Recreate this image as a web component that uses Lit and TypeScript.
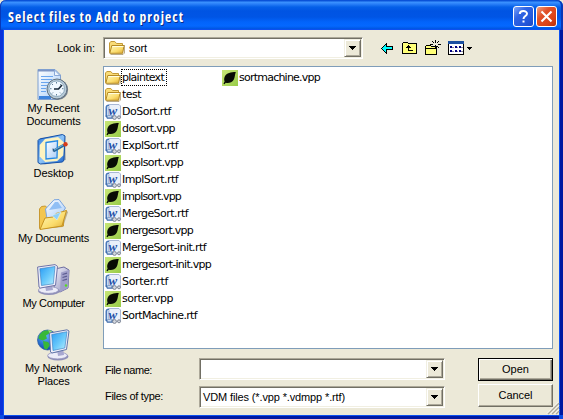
import { LitElement, html, svg, css } from "lit";
import { customElement, property } from "lit/decorators.js";

/** A run of text spaced out to an exact width, as bitmap UI fonts are. */
@customElement("ui-text")
class UiText extends LitElement {
  @property({ type: Number }) w = 0;
  @property() text = "";
  static styles = css`
    :host { display: inline-block; white-space: pre; }
  `;
  render() {
    return html`<span>${this.text}</span>`;
  }
  updated() {
    const s = this.renderRoot.querySelector("span") as HTMLElement;
    s.style.letterSpacing = "0px";
    const n = s.getBoundingClientRect().width;
    s.style.letterSpacing = `${(this.w - n) / this.text.length}px`;
  }
}

const defs = svg`<defs>
  <linearGradient id="fold" x1="0" y1="0" x2="1" y2="1"><stop offset="0" stop-color="#fffbc4"/><stop offset=".6" stop-color="#fbdc6c"/><stop offset="1" stop-color="#dca832"/></linearGradient>
  <linearGradient id="scr" x1="0" y1="0" x2="1" y2="1"><stop offset="0" stop-color="#2a9cf4"/><stop offset=".55" stop-color="#6ccbfb"/><stop offset="1" stop-color="#bdf0ff"/></linearGradient>
  <linearGradient id="gry" x1="0" y1="0" x2="1" y2="1"><stop offset="0" stop-color="#f4f4fc"/><stop offset="1" stop-color="#8c8cba"/></linearGradient>
  <linearGradient id="blu" x1="0" y1="0" x2="1" y2="1"><stop offset="0" stop-color="#2c7ae0"/><stop offset=".5" stop-color="#8cc4f8"/><stop offset="1" stop-color="#1c64cc"/></linearGradient>
  <linearGradient id="pap" x1="0" y1="0" x2="1" y2="1"><stop offset="0" stop-color="#ffffff"/><stop offset="1" stop-color="#a8ccf8"/></linearGradient>
  <linearGradient id="grn" x1="0" y1="0" x2="1" y2="1"><stop offset="0" stop-color="#c8e678"/><stop offset="1" stop-color="#98cc48"/></linearGradient>
  <radialGradient id="glb" cx=".4" cy=".3" r=".7"><stop offset="0" stop-color="#60b8ff"/><stop offset="1" stop-color="#0c48b4"/></radialGradient>
</defs>`;

const folder = svg`
  <path d="M1.500 14.500h12.500l1.500-1.500V5" fill="none" stroke="#8c7440" stroke-opacity=".6"/>
  <path d="M.5 12.500V3L1.800 1.500h4L7.500 3.500h6v9z" fill="#f9dc78" stroke="#c39a38"/>
  <path d="M.8 13.300L2.800 5.500h12.200l-1.300 7.800z" fill="url(#fold)" stroke="#b58a24"/>
  <path d="M3.500 6.500h11" stroke="#fffde0"/>`;

const rtf = svg`
  <path d="M4 .5h10l1.500 1.500v11.500H4z" fill="#eaf0fa" stroke="#a9b8d6"/>
  <path d="M1.300 13V3.500Q1.300 1.300 4 1.300" fill="none" stroke="#4a78b8" stroke-width="1.600"/>
  <path d="M.5 11.500h8.500v3.300H2z" fill="#3f6caa"/>
  <path d="M2.500 12.800h4" stroke="#e4eefa" stroke-width="1.300"/>
  <path d="M2.500 3h1.500v8H2.500z" fill="#a7c2e6"/>
  <text class="w" x="3.600" y="10.500">w</text>
  <circle cx="9.500" cy="13.500" r="1.900" fill="#d4d8e0" stroke="#7f8795"/>
  <circle cx="14" cy="13.300" r="1.500" fill="#d4d8e0" stroke="#7f8795"/>`;

const vpp = svg`
  <rect width="16" height="16" fill="url(#grn)"/>
  <path d="M13.800 2C9 2 4.500 3 2.800 6.500c-1 2-.6 4-.2 5L1.500 13.700l1 .5 1.200-1.500c3 .8 6.300-.2 8-3C13 7.500 12.800 4.500 13.800 2z" fill="#080c04"/>`;

const small: Record<string, unknown> = { folder, rtf, vpp };
const icon16 = (k: string) => html`<svg class="i16" viewBox="0 0 16 16">${defs}${small[k]}</svg>`;

const recent = svg`
  <path d="M1 .5h17l5.500 5.500V29L21 30.500H1z" fill="url(#pap)" stroke="#7f9fd0"/>
  <path d="M1 1h16v1.500H1z" fill="#7c94c4"/>
  <path d="M17.500 1v5.500H23z" fill="#eef6ff" stroke="#8caad8"/>
  <path d="M4 7.500h12M4 10.500h11M4 13.500h8M4 16.500h6M4 19.500h5M4 22.500h5" stroke="#6aa5ee"/>
  <path d="M2 28.500h12" stroke="#3f84dc" stroke-width="3"/>
  <circle cx="20.700" cy="20.700" r="10.400" fill="#77828e"/>
  <circle cx="20" cy="20" r="10" fill="#b9cbd8" stroke="#607282"/>
  <circle cx="19.700" cy="19.700" r="7.800" fill="#f1f9ff" stroke="#8ba8bc"/>
  <path d="M19.500 13v1.500M19.500 25v1.500M13 19.700h1.500M25 19.700h1.500M24 15l-1 1M15 15l1 1M15 24.500l1-1M24 24.500l-1-1" stroke="#5f7f98"/>
  <path d="M17 20h4.500L25 16" fill="none" stroke="#182838" stroke-width="1.700"/>`;

const desktop = svg`
  <path d="M3.500 4L28 1l1 25-21 4.500L1.500 29z" fill="#8c949c" opacity=".6"/>
  <path d="M1 6.500L2.500 5l23-4.500L28 2l-1 24-1.500 2-22 2L1 28.500z" fill="url(#blu)" stroke="#1450a8"/>
  <path d="M8 5l13-2 6 5.500-.8 13-6 5.500-12 1-5.500-5.500V11z" fill="#fdf3c0"/>
  <path d="M9 8.500l11.500-1.700-.5 17L9 25z" fill="url(#pap)" stroke="#2488e4" stroke-width="1.300"/>
  <path d="M15.500 14.500l3 .8-2.500 2.700z" fill="#284868"/>
  <path d="M16.500 17L27 11" stroke="#28689c" stroke-width="2.600"/>
  <path d="M17 16l9-5" stroke="#86c7ec" stroke-width=".8"/>
  <circle cx="28.500" cy="10.300" r="2.200" fill="#d83c18"/>`;

const documents = svg`
  <path d="M4 30l22-2 5-15-2-2z" fill="#887848" opacity=".5"/>
  <path d="M2.500 29.500V10l2-2.500 4-.5 2 2.500 16 1V27z" fill="#f3c650" stroke="#c89830"/>
  <path d="M8.500 10L17 .8l5-.3L28.500 9 21 20H10z" fill="url(#pap)" stroke="#7ba6e0"/>
  <path d="M12 11l6-8 3 0 4 6z" fill="#90bff5"/>
  <path d="M3 30.500L8 19l8-1 3-3.500 10.500-3L25 27z" fill="url(#fold)" stroke="#c89420"/>
  <path d="M15 16.500l9-3.500-4 8z" fill="#8fd0f8" stroke="#d8f0ff" stroke-width=".6"/>`;

const computer = svg`
  <path d="M18 5l9-2 5 3-1 18-8 4-6-3z" fill="url(#gry)" stroke="#6c6ca0"/>
  <path d="M24 8.500l8-2.500-1 18-8 4z" fill="#a09fc9"/>
  <path d="M25.500 10.500l4.500-1.300M25.500 13.500l4.500-1.300M25.500 16.500l4.500-1.300" stroke="#5d5d92" stroke-width="1.300"/>
  <circle cx="29" cy="21.500" r="1.200" fill="#54e018"/>
  <ellipse cx="12" cy="27" rx="11" ry="4" fill="#9090b8"/>
  <ellipse cx="11.500" cy="26" rx="10" ry="3.400" fill="#ececf8" stroke="#8888b4" stroke-width=".7"/>
  <path d="M8 21h7l1 5-7 1z" fill="#a8a8d0"/>
  <path d="M.6 3L18 .6l2.500 1.700-2 19L3.500 24l-1.500-1z" fill="#f0f0fb" stroke="#7074a8"/>
  <path d="M2.800 4.700L18 2.500l-1.700 17.300L4.500 21.500z" fill="url(#scr)" stroke="#3478bc" stroke-width=".6"/>`;

const network = svg`
  <circle cx="10.500" cy="11" r="10" fill="url(#glb)" stroke="#2458a0" stroke-width=".7"/>
  <path d="M8 1.500l5 0-1 3-3 2 1 3-4 2-3-1-1.500-1C2 5.500 4.500 2.500 8 1.500zM6 12l5 1 2 3-3 4.500-3-1z" fill="#38b838"/>
  <path d="M11 1l4 1-2 3z" fill="#98e070"/>
  <ellipse cx="21" cy="27.500" rx="10.500" ry="4" fill="#9090b8"/>
  <ellipse cx="20.500" cy="26.500" rx="9.800" ry="3.400" fill="#ececf8" stroke="#8888b4" stroke-width=".7"/>
  <path d="M20 20l6-1 1 7-6 1z" fill="#a8a8d0"/>
  <path d="M12.500 4L30 .8l2 1.200-2.500 18.500L15 24l-1.500-1z" fill="#f0f0fb" stroke="#6074a8"/>
  <path d="M14.700 5.500L30 2.700 27.800 19 16 21.500z" fill="url(#scr)" stroke="#3478bc" stroke-width=".6"/>`;

const places = [
  { icon: recent, lines: [["My Recent", 52], ["Documents", 54]] },
  { icon: desktop, lines: [["Desktop", 40]] },
  { icon: documents, lines: [["My Documents", 71]] },
  { icon: computer, lines: [["My Computer", 62]] },
  { icon: network, lines: [["My Network", 57], ["Places", 32]] },
] as { icon: unknown; lines: [string, number][] }[];

const files: [string, string, number][] = [
  ["folder", "plaintext", 42], ["folder", "test", 19],
  ["rtf", "DoSort.rtf", 49], ["vpp", "dosort.vpp", 53],
  ["rtf", "ExplSort.rtf", 56], ["vpp", "explsort.vpp", 61],
  ["rtf", "ImplSort.rtf", 56], ["vpp", "implsort.vpp", 59],
  ["rtf", "MergeSort.rtf", 66], ["vpp", "mergesort.vpp", 71],
  ["rtf", "MergeSort-init.rtf", 84], ["vpp", "mergesort-init.vpp", 89],
  ["rtf", "Sorter.rtf", 46], ["vpp", "sorter.vpp", 51],
  ["rtf", "SortMachine.rtf", 75], ["vpp", "sortmachine.vpp", 81],
];

const arrow = html`<span class="drop"><svg width="7" height="4" viewBox="0 0 7 4" shape-rendering="crispEdges"><path d="M0 0h7v1H6v1H5v1H4v1H3V3H2V2H1V1H0z"/></svg></span>`;

@customElement("app-root")
class AppRoot extends LitElement {
  static styles = css`
    :host {
      display: flex; flex-direction: column; box-sizing: border-box;
      width: 563px; height: 419px; overflow: hidden;
      font: 11px/13px "Liberation Sans", Arial, sans-serif; color: #000;
      background: linear-gradient(#ece9d8 12px, #0a4ae4 12px);
    }
    * { box-sizing: border-box; }
    svg { display: block; flex: none; overflow: visible; }
    .title {
      height: 30px; flex: none; display: flex; align-items: center; padding: 3px 6px 0 8px;
      background: linear-gradient(#0a52d8 0, #0a52d8 1px, #3d95ff 2px, #2a80f8 4px, #0560e8 7px, #0054e3 11px, #0055e5 17px, #0264fb 22px, #0468ff 26px, #0054e0 29px, #0046c8 30px);
      border-radius: 6px 6px 0 0;
      box-shadow: inset 1px 0 #0838b8, inset -2px 0 #0838b8;
    }
    .title ui-text {
      flex: 1; color: #fff; font: bold 13.5px/20px "Open Sans", "Noto Sans", sans-serif; font-stretch: 87%;
      text-shadow: 1px 1px #0a2c88;
    }
    .cap { width: 21px; height: 21px; border: 1px solid #fff; border-radius: 3px; margin-left: 2px;
      display: grid; place-items: center; }
    .help { background: linear-gradient(135deg, #7ca4f8, #3064e4 35%, #2458dc 70%, #1c48c4); }
    .close { background: linear-gradient(135deg, #f0a080, #e05028 35%, #dc4418 70%, #b83008); }
    .body {
      flex: 1; min-height: 0; margin: 0 4px 4px; background: #ece9d8;
      display: grid; grid-template-columns: 99px 1fr; position: relative;
      box-shadow: 0 0 0 1px #0c50f0, -4px 0 0 -1px #0831d9, 0 4px #0018a0, 4px 0 #0018a0, -4px 0 #0831d9;
    }
    .left { padding-top: 7px; }
    .left .lookin { height: 32px; text-align: right; padding: 5px 8px 0 0; }
    .place { height: 65px; display: flex; flex-direction: column; align-items: center; }
    .place svg { width: 32px; height: 32px; margin-bottom: 1px; margin-right: 2px; }
    .main { display: flex; flex-direction: column; padding: 7px 6px 0 0; }
    .row { display: flex; }
    .sunk {
      background: #fff; border: 1px solid; border-color: #aca899 #fff #fff #aca899;
      box-shadow: inset 1px 1px #716f64, inset -1px -1px #f1efe2;
      display: flex; align-items: center;
    }
    .look { width: 260px; height: 22px; padding: 0 1px 0 5px; }
    .look ui-text { flex: 1; margin-left: 4px; }
    .drop {
      width: 17px; height: 18px; flex: none; background: #ece9d8; display: grid; place-items: center;
      border: 1px solid; border-color: #f1efe2 #716f64 #716f64 #f1efe2;
      box-shadow: inset 1px 1px #fff, inset -1px -1px #aca899;
    }
    .tools { margin: 3px 0 0 18px; }
    .list {
      height: 283px; width: 450px; margin-top: 7px; border: 1px solid #7f9db9; background: #fff; padding: 2px 1px;
      display: grid; grid-auto-flow: column; grid-template-rows: repeat(15, 17px); grid-template-columns: 117px auto;
      justify-content: start; align-content: start;
    }
    .file { display: flex; align-items: center; font: 11px/13px "DejaVu Sans", sans-serif; }
    .i16 { width: 16px; height: 16px; }
    .w { font: italic bold 13px "Liberation Serif", serif; fill: #2350a8; }
    .file .name { height: 17px; line-height: 15px; padding: 1px; }
    .file .sel { padding: 0; border: 1px dotted #000; width: 46px; }
    .foot { margin-top: 9px; height: 50px; display: grid; grid-template-columns: 96px 246px 109px; }
    .labels { padding: 6px 0 0 2px; display: flex; flex-direction: column; gap: 13px; }
    .fields { display: flex; flex-direction: column; gap: 6px; }
    .fields .sunk { height: 22px; padding: 0 1px 0 3px; }
    .fields .sunk ui-text, .grow { flex: 1; }
    .buttons { margin-left: 33px; width: 75px; display: flex; flex-direction: column; gap: 3px; }
    .btn {
      height: 23px; display: grid; place-items: center; border: 1px solid;
      border-color: #fff #716f64 #716f64 #fff; box-shadow: inset -1px -1px #aca899;
    }
    .btn.def { border-color: #000; box-shadow: inset 1px 1px #fff, inset -1px -1px #716f64, inset -2px -2px #aca899; }
    .grip { position: absolute; right: 0; bottom: 1px; }
  `;

  render() {
    return html`
      <div class="title">
        <ui-text .w=${176} text="Select files to Add to project"></ui-text>
        <div class="cap help"><svg width="11" height="13" viewBox="0 0 11 13"><path d="M1.800 4C1.800 .2 9 .2 9 3.700 9 6 5.500 6.200 5.500 9" fill="none" stroke="#fff" stroke-width="2"/><path d="M4.500 10.500h2v2h-2z" fill="#fff"/></svg></div>
        <div class="cap close"><svg width="11" height="11" viewBox="0 0 11 11"><path d="M.5 .5l10 10M10.500 .5l-10 10" stroke="#fff" stroke-width="2.100"/></svg></div>
      </div>
      <div class="body">
        <div class="left">
          <div class="lookin"><ui-text .w=${38} text="Look in:"></ui-text></div>
          ${places.map(p => html`<div class="place">
            <svg viewBox="0 0 32 32">${defs}${p.icon}</svg>
            ${p.lines.map(([t, w]) => html`<ui-text .w=${w} text=${t}></ui-text>`)}
          </div>`)}
        </div>
        <div class="main">
          <div class="row">
            <div class="sunk look">${icon16("folder")}<ui-text .w=${18} text="sort"></ui-text>${arrow}</div>
            <svg class="tools" width="94" height="16" viewBox="0 0 94 16" shape-rendering="crispEdges">
              <path d="M.5 8.500L5.500 3.500v3h6v3h-6v4z" fill="#00ffff" stroke="#000"/>
              <path d="M21.500 13.500v-10l1-1h4l1 1h8v10z" fill="#ffff78" stroke="#000"/>
              <path d="M25 7h1V6h1V5h1v1h1v1h1v1h-2v2h4v1h-5V8h-2z"/>
              <path d="M44.500 14.500v-8l1-1h4l1 1h5v8z" fill="#ffff78" stroke="#000"/>
              <path d="M44.500 8.500h11" stroke="#000"/>
              <path d="M54 0h1v3h-1zM54 5h1v3h-1zM49 4h3v1h-3zM57 4h3v1h-3zM51 1h1v1h-1zM52 2h1v1h-1zM57 1h1v1h-1zM56 2h1v1h-1zM52 6h1v1h-1zM56 6h1v1h-1zM57 7h1v1h-1z"/>
              <path d="M67.500 1.500h15v13h-15z" fill="#fff" stroke="#000"/>
              <path d="M67 1h16v3H67z" fill="#1c50a0"/>
              <path d="M69 6h2v2h-2zM73.500 6h2v2h-2zM78 6h2v2h-2zM69 10h2v2h-2zM74 10h2v2h-2zM78 10h2v2h-2z" fill="#000080"/>
              <path d="M71 7h2v1h-2zM76 7h1v1h-1zM80 7h2v1h-2zM71 11h2v1h-2zM76 11h1v1h-1zM80 11h2v1h-2z" fill="#889"/>
              <path d="M86 7h5v1h-1v1h-1v1h-1V9h-1V8h-1z"/>
            </svg>
          </div>
          <div class="list">
            ${files.map(([k, t, w], i) => html`<div class="file">${icon16(k)}<span class="name ${i ? "" : "sel"}"><ui-text .w=${w} text=${t}></ui-text></span></div>`)}
          </div>
          <div class="foot">
            <div class="labels"><ui-text .w=${47} text="File name:"></ui-text><ui-text .w=${58} text="Files of type:"></ui-text></div>
            <div class="fields">
              <div class="sunk"><span class="grow"></span>${arrow}</div>
              <div class="sunk"><ui-text .w=${142} text="VDM files (*.vpp *.vdmpp *.rtf)"></ui-text>${arrow}</div>
            </div>
            <div class="buttons">
              <div class="btn def"><ui-text .w=${27} text="Open"></ui-text></div>
              <div class="btn"><ui-text .w=${34} text="Cancel"></ui-text></div>
            </div>
          </div>
        </div>
        <svg class="grip" width="11" height="11" viewBox="0 0 11 11"><path d="M0 11L11 0M4 11l7-7M8 11l3-3" stroke="#aca899" stroke-width="1.600"/><path d="M-1 10.500L10.500-1M2.500 11L11 2.500M6.500 11L11 6.500" stroke="#fff" stroke-width=".8"/></svg>
      </div>`;
  }
}
